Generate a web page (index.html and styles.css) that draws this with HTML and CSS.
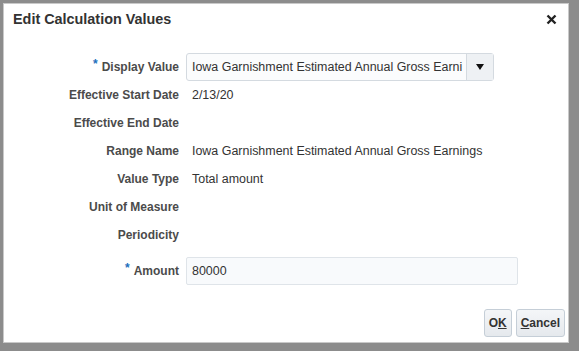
FILE: index.html
```html
<!DOCTYPE html>
<html lang="en">
<head>
	<meta charset="UTF-8">
	<title>Edit Calculation Values</title>
	<link rel="stylesheet" href="styles.css">
</head>
<body>
	<div class="dialog">
		<div class="dialog--header">
			<h1 class="dialog--title">Edit Calculation Values</h1>
			<svg class="dialog--close" width="11" height="11" viewBox="0 0 11 11">
				<path d="M1.5 1.5 L9.5 9.5 M9.5 1.5 L1.5 9.5" stroke="#222" stroke-width="2.4"/>
			</svg>
		</div>

		<div class="form">
			<label class="form--label"><span class="required">*</span> Display Value</label>
			<div class="select">
				<span class="select--text">Iowa Garnishment Estimated Annual Gross Earni</span>
				<span class="select--button"><span class="arrow"></span></span>
			</div>

			<label class="form--label">Effective Start Date</label>
			<div class="form--value">2/13/20</div>

			<label class="form--label">Effective End Date</label>
			<div class="form--value"></div>

			<label class="form--label">Range Name</label>
			<div class="form--value">Iowa Garnishment Estimated Annual Gross Earnings</div>

			<label class="form--label">Value Type</label>
			<div class="form--value">Total amount</div>

			<label class="form--label">Unit of Measure</label>
			<div class="form--value"></div>

			<label class="form--label">Periodicity</label>
			<div class="form--value"></div>

			<label class="form--label form--last"><span class="required">*</span> Amount</label>
			<div class="input form--last">80000</div>
		</div>

		<div class="dialog--footer">
			<button class="button">O<u>K</u></button>
			<button class="button"><u>C</u>ancel</button>
		</div>
	</div>
</body>
</html>
```

FILE: styles.css
```css
body {
	margin: 0;
	width: 579px;
	height: 351px;
	background: #8c8c8c;
	font-family: "Liberation Sans", Arial, sans-serif;
	font-size: 12px;
	color: #333;
	padding: 3px 0 0 3px;
	box-sizing: border-box;
}

.dialog {
	width: 566px;
	height: 340px;
	background: #fff;
	border: 1px solid #c9c9c9;
	box-sizing: border-box;
	display: flex;
	flex-direction: column;
}

.dialog--header {
	display: flex;
	justify-content: space-between;
	align-items: center;
	padding: 3px 9px 0 9px;
	height: 24px;
}

.dialog--title {
	margin: 0;
	font-size: 14.4px;
	font-weight: bold;
	color: #333;
}

.dialog--close {
	margin-right: 2px;
}

.form {
	display: grid;
	grid-template-columns: 175px 308px;
	grid-template-rows: repeat(7, 28px) 36px;
	column-gap: 7px;
	margin-top: 22px;
}

.form--label {
	display: flex;
	align-items: center;
	justify-content: flex-end;
	font-weight: bold;
	color: #4b4b4b;
}

.form--last {
	align-self: end;
	height: 28px;
}

.required {
	color: #1d6fbd;
	margin-right: 4px;
	position: relative;
	top: -3px;
}

.form--value {
	display: flex;
	align-items: center;
	padding-left: 6px;
	white-space: nowrap;
	font-size: 12.45px;
}

.select {
	display: flex;
	border: 1px solid #d4dae0;
	border-radius: 3px;
	background: #fbfcfd;
}

.select--text {
	flex: 1;
	display: flex;
	align-items: center;
	padding-left: 5px;
	overflow: hidden;
	white-space: nowrap;
	font-size: 12.45px;
}

.select--button {
	width: 26px;
	border-left: 1px solid #d4dae0;
	background: #eef1f4;
	display: flex;
	align-items: center;
	justify-content: center;
}

.arrow {
	width: 0;
	height: 0;
	border-left: 4px solid transparent;
	border-right: 4px solid transparent;
	border-top: 6px solid #111;
}

.input {
	width: 332px;
	border: 1px solid #dfe4e9;
	border-radius: 2px;
	background: #f8fafc;
	display: flex;
	align-items: center;
	padding-left: 5px;
	box-sizing: border-box;
	font-size: 12.45px;
}

.dialog--footer {
	display: flex;
	justify-content: flex-end;
	gap: 4px;
	margin-top: auto;
	padding: 0 3px 5px 0;
}

.button {
	height: 28px;
	padding: 0 4px;
	border: 1px solid #c5ced7;
	border-radius: 3px;
	background: linear-gradient(#f4f6f8, #e5e9ed);
	font-family: "Liberation Sans", Arial, sans-serif;
	font-size: 12px;
	font-weight: bold;
	color: #333;
}
```
